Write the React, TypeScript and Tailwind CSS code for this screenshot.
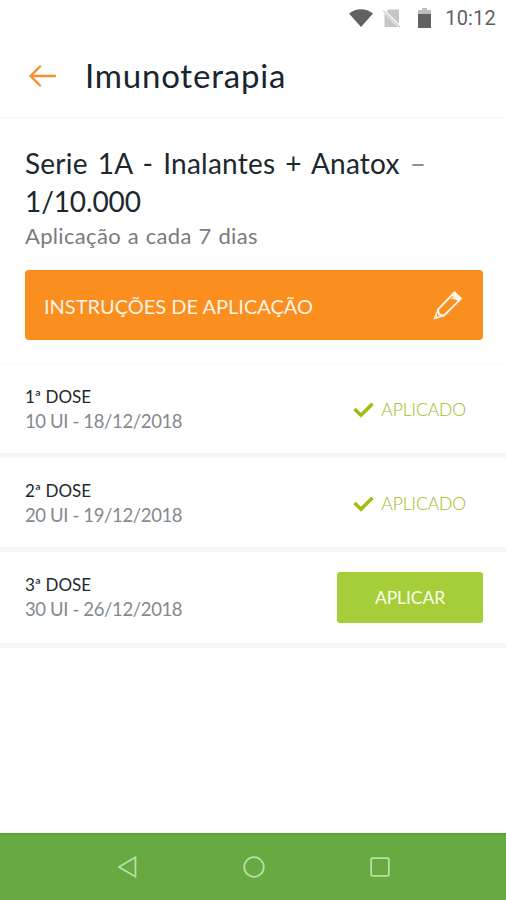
import clsx from 'clsx';

interface Dose {
  label: string;
  detail: string;
  applied: boolean;
}

const doses: Dose[] = [
  { label: '1ª DOSE', detail: '10 UI - 18/12/2018', applied: true },
  { label: '2ª DOSE', detail: '20 UI - 19/12/2018', applied: true },
  { label: '3ª DOSE', detail: '30 UI - 26/12/2018', applied: false },
];

function StatusBar() {
  return (
    <div className="flex h-9 shrink-0 items-center justify-end pr-[10px]">
      <svg width="24" height="18" viewBox="0 0 24 18" className="mr-[10px]">
        <path d="M0 4.5C7 -1.2 17 -1.2 24 4.5L12 18Z" fill="#616161" />
      </svg>
      <svg width="18" height="19" viewBox="0 0 18 19" className="mr-[17px]">
        <path d="M5.5 0.5H16V15L3.5 2.5Z" fill="#c6c6c6" />
        <path d="M1.5 4.5L15 18H1.5Z" fill="#c6c6c6" />
        <path d="M0.3 1.6L16.8 18.2" stroke="#c6c6c6" strokeWidth="1.1" />
      </svg>
      <svg width="13" height="20" viewBox="0 0 13 20" className="mr-[14px]">
        <path d="M4 0H9V2H13V6H0V2H4Z" fill="#bdbdbd" />
        <path d="M0 6H13V20H0Z" fill="#616161" />
      </svg>
      <span className="font-['Roboto',sans-serif] text-[20px] leading-none tracking-[0.2px] text-[#5f5f5f]">10:12</span>
    </div>
  );
}

function Header() {
  return (
    <header className="flex h-[83px] shrink-0 items-center border-b-2 border-[#fbfbfb] pb-0.5 pl-[29px]">
      <button aria-label="Voltar">
        <svg width="28" height="22" viewBox="0 0 28 22" fill="none" stroke="#f88f2b" strokeWidth="2.4" strokeLinecap="round" strokeLinejoin="round">
          <path d="M11 1.5L1.5 11L11 20.5M1.5 11H26" />
        </svg>
      </button>
      <h1 className="ml-7 text-[33px] leading-none tracking-[0.8px] text-[#182430]">Imunoterapia</h1>
    </header>
  );
}

function PencilIcon() {
  return (
    <svg width="30" height="30" viewBox="0 0 30 30" fill="none" stroke="#fff3e4" strokeWidth="1.9" strokeLinejoin="round">
      <path d="M5 19.5L19.5 4.5L25.8 10.8L11 25.5L6 24.5Z" />
      <path d="M18.5 9L20 7.8Q21.5 8 22 10" strokeWidth="1.3" />
      <path d="M21.5 1.5L28.8 8.5L26.5 10.8L19.2 3.8Z" fill="#fff3e4" strokeWidth="1" />
      <path d="M5 19.5L1.5 28.5L11 25.5" strokeWidth="1.4" />
      <path d="M1.2 28.8L2.8 25L5 27.2Z" fill="#fff3e4" strokeWidth="0.8" />
    </svg>
  );
}

function DoseRow({ dose, className }: { dose: Dose; className?: string }) {
  return (
    <li className={clsx('flex items-center justify-between border-b-[5px] border-[#f6f7f8] pl-[25px] pr-[23px]', className)}>
      <div className={clsx(!dose.applied && 'pb-0.5')}>
        <p className="text-[17px] leading-6 text-[#20292e]">{dose.label}</p>
        <p className="text-[18.5px] leading-6 tracking-[-0.37px] text-[#85898e]">{dose.detail}</p>
      </div>
      {dose.applied ? (
        <div className="flex items-center pr-[17px] pt-0.5 text-[#9dbd20]">
          <svg width="21" height="16" viewBox="0 0 21 16" fill="none" stroke="#9fbf16" strokeWidth="3.6" className="mr-[7px]">
            <path d="M1.5 7L8 13.2L19.5 1.8" />
          </svg>
          <span className="text-[17.5px] font-light leading-none tracking-[-0.1px]">APLICADO</span>
        </div>
      ) : (
        <button className="h-[51px] w-[146px] rounded-[3px] bg-[#a5ce39] pt-0.5 text-[17.5px] tracking-[-0.1px] text-[#fbfff0]">
          APLICAR
        </button>
      )}
    </li>
  );
}

function NavBar() {
  return (
    <nav className="mt-auto flex h-[67px] shrink-0 items-center justify-between border-t-2 border-[#5ba52f] bg-[#66aa41] pb-0.5 pl-[117px] pr-[116px]">
      <svg width="20" height="22" viewBox="0 0 20 22" fill="none" stroke="#b9e0a4" strokeWidth="1.8" strokeLinejoin="round">
        <path d="M18.5 1.3V20.7L1.8 11Z" />
      </svg>
      <svg width="22" height="22" viewBox="0 0 22 22" fill="none" stroke="#b9e0a4" strokeWidth="1.8">
        <circle cx="11" cy="11" r="9.8" />
      </svg>
      <svg width="20" height="20" viewBox="0 0 20 20" fill="none" stroke="#b9e0a4" strokeWidth="1.8">
        <rect x="1.2" y="1.2" width="17.6" height="17.6" rx="1" />
      </svg>
    </nav>
  );
}

export default function App() {
  return (
    <div className="flex h-[900px] w-[506px] flex-col overflow-hidden bg-white font-['Lato',sans-serif]">
      <StatusBar />
      <Header />
      <section className="h-[246px] shrink-0 border-b border-[#fafafa] pl-[25px] pr-[23px] pt-[25px]">
        <h2 className="whitespace-nowrap text-[28px] leading-[38px] tracking-[0.22px] [word-spacing:2.7px] text-[#1c272e]">
          Serie 1A - Inalantes + Anatox <span className="text-[#8e9296]">–</span>
          <br />
          <span className="tracking-[-0.1px]">1/10.000</span>
        </h2>
        <p className="text-[22px] leading-8 tracking-[0.33px] [word-spacing:0.8px] text-[#7b7b7b]">Aplicação a cada 7 dias</p>
        <button className="mt-[18px] flex h-[70px] w-full items-center justify-between rounded-[4px] bg-[#fa8e1e] pl-[19px] pr-5 text-[#fff3e4]">
          <span className="pt-px text-[20px]">INSTRUÇÕES DE APLICAÇÃO</span>
          <PencilIcon />
        </button>
      </section>
      <ul>
        {doses.map((dose, i) => (
          <DoseRow
            key={dose.label}
            dose={dose}
            className={i === doses.length - 1 ? 'h-24' : i === 0 ? 'h-[93px]' : 'h-[94px]'}
          />
        ))}
      </ul>
      <NavBar />
    </div>
  );
}
